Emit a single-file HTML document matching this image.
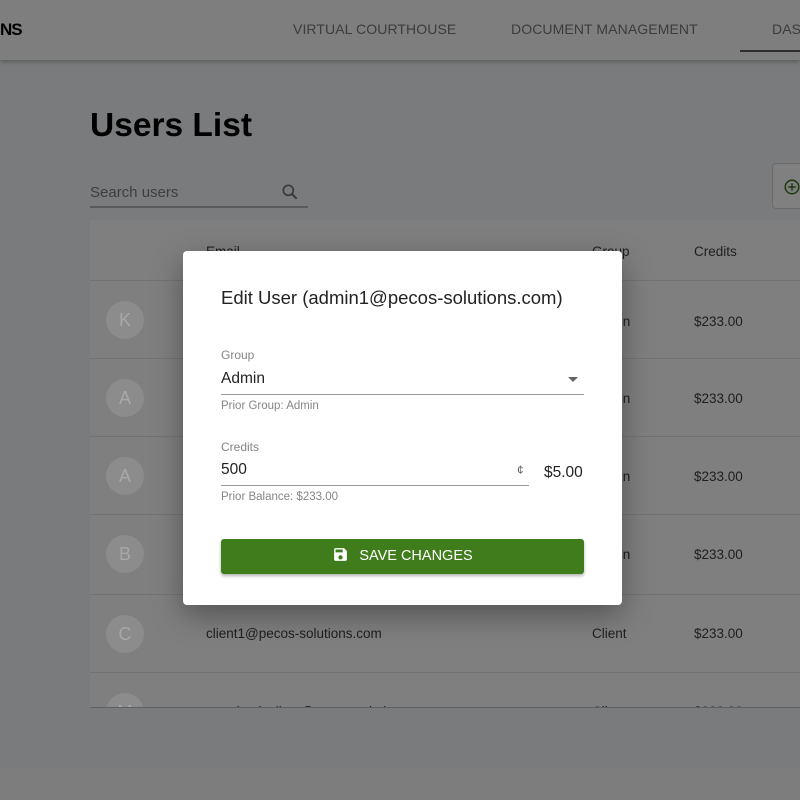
<!DOCTYPE html>
<html><head><style>
*{margin:0;padding:0;box-sizing:border-box}
body{width:800px;height:800px;overflow:hidden;background:#797b7c;font-family:"Liberation Sans",sans-serif;position:relative}
.hdr{position:absolute;left:0;top:0;width:800px;height:60px;background:#7e7e7e;box-shadow:0 2px 4px rgba(0,0,0,.25)}
.hdr span{position:absolute;top:21px;font-size:14px;color:#3c3c3c;letter-spacing:.1px}
.title{position:absolute;left:90px;top:107px;font-size:33.5px;font-weight:bold;color:#000}
.search{position:absolute;left:90px;top:184px;width:218px;height:24px;border-bottom:2px solid #5a5a5a;font-size:15px;color:#3e3e3e}
.tbl{position:absolute;left:90px;top:220px;width:710px;height:488px;background:#7f7f7f;overflow:hidden;border-bottom:1px solid #606060}
.row{position:absolute;left:0;width:710px;border-top:1px solid #737373;font-size:13.5px;color:#1e1e1e}
.av{position:absolute;left:16px;width:38px;height:38px;border-radius:50%;background:#8c8c8c;color:#a8a8a8;font-size:18px;text-align:center;line-height:38px}
.foot{position:absolute;left:0;top:768px;width:800px;height:32px;background:#7d7d7d}
.modal{position:absolute;left:183px;top:251px;width:439px;height:354px;background:#fff;border-radius:4px;box-shadow:0 10px 30px rgba(0,0,0,.35)}
.lbl{position:absolute;left:38px;font-size:12px;color:#858585}
.val{position:absolute;left:38px;font-size:15.5px;color:#222}
.line{position:absolute;left:38px;height:1px;background:#9a9a9a}
.btn{position:absolute;left:38px;top:288px;width:363px;height:35px;background:#3f7c1b;border-radius:3px;box-shadow:0 2px 3px rgba(0,0,0,.3);color:#fff;font-size:14.5px;text-align:center;line-height:35px}
</style></head><body>
<div class="hdr">
<span style="left:0;font-weight:bold;font-size:17px;color:#000;top:20px;letter-spacing:-1px">NS</span>
<span style="left:293px">VIRTUAL COURTHOUSE</span>
<span style="left:511px">DOCUMENT MANAGEMENT</span>
<span style="left:772px">DAS</span>
<div style="position:absolute;left:740px;top:50px;width:60px;height:2px;background:#2e2e2e"></div>
</div>
<div class="title">Users List</div>
<div class="search">Search users
<svg style="position:absolute;right:8px;top:-2px" width="20" height="20" viewBox="0 0 24 24"><circle cx="10" cy="10" r="6" fill="none" stroke="#3a3a3a" stroke-width="2"/><path d="M14.5 14.5L20 20" stroke="#3a3a3a" stroke-width="2.4"/></svg></div>
<div style="position:absolute;left:772px;top:163px;width:40px;height:46px;border:1px solid #6a6a6a;border-radius:4px;background:#808080"><svg style="position:absolute;left:10px;top:14px" width="18" height="18" viewBox="0 0 24 24"><circle cx="12" cy="12" r="9" fill="none" stroke="#1f3a0e" stroke-width="2"/><path d="M12 7v10M7 12h10" stroke="#1f3a0e" stroke-width="2"/></svg></div>
<div class="tbl">
<div class="row" style="top:0;height:60px;border:none"><span style="position:absolute;left:116px;top:24px">Email</span><span style="position:absolute;left:502px;top:24px">Group</span><span style="position:absolute;left:604px;top:24px">Credits</span></div>
<div class="row" style="top:60px;height:78px"><div class="av" style="top:20px">K</div><span style="position:absolute;left:502px;top:33px">Admin</span><span style="position:absolute;left:604px;top:33px">$233.00</span></div>
<div class="row" style="top:138px;height:78px"><div class="av" style="top:20px">A</div><span style="position:absolute;left:502px;top:32px">Admin</span><span style="position:absolute;left:604px;top:32px">$233.00</span></div>
<div class="row" style="top:216px;height:78px"><div class="av" style="top:20px">A</div><span style="position:absolute;left:502px;top:32px">Admin</span><span style="position:absolute;left:604px;top:32px">$233.00</span></div>
<div class="row" style="top:294px;height:80px"><div class="av" style="top:20px">B</div><span style="position:absolute;left:502px;top:32px">Admin</span><span style="position:absolute;left:604px;top:32px">$233.00</span></div>
<div class="row" style="top:374px;height:78px"><div class="av" style="top:20px">C</div><span style="position:absolute;left:116px;top:31px">client1@pecos-solutions.com</span><span style="position:absolute;left:502px;top:31px">Client</span><span style="position:absolute;left:604px;top:31px">$233.00</span></div>
<div class="row" style="top:452px;height:78px"><div class="av" style="top:20px">M</div><span style="position:absolute;left:116px;top:31px">notarized_client@pecos-solutions.com</span><span style="position:absolute;left:502px;top:31px">Client</span><span style="position:absolute;left:604px;top:31px">$233.00</span></div>
</div>
<div class="foot"></div>
<div class="modal">
<div style="position:absolute;left:38px;top:36px;font-size:18.5px;color:#222">Edit User (admin1@pecos-solutions.com)</div>
<div class="lbl" style="top:97px">Group</div>
<div class="val" style="top:119px">Admin</div>
<div style="position:absolute;left:385px;top:126px;width:0;height:0;border-left:5px solid transparent;border-right:5px solid transparent;border-top:5px solid #666"></div>
<div class="line" style="top:143px;width:363px"></div>
<div class="lbl" style="top:149px;font-size:11.5px">Prior Group: Admin</div>
<div class="lbl" style="top:189px">Credits</div>
<div class="val" style="top:210px">500</div>
<div style="position:absolute;left:334px;top:212px;font-size:12px;color:#666">¢</div>
<div style="position:absolute;left:361px;top:213px;font-size:15.5px;color:#222">$5.00</div>
<div class="line" style="top:234px;width:308px"></div>
<div class="lbl" style="top:240px;font-size:11.5px">Prior Balance: $233.00</div>
<div class="btn"><svg style="vertical-align:-3px;margin-right:10px" width="17" height="17" viewBox="0 0 24 24"><path fill="#fff" d="M17 3H5c-1.1 0-2 .9-2 2v14c0 1.1.9 2 2 2h14c1.1 0 2-.9 2-2V7l-4-4zm-5 16c-1.66 0-3-1.34-3-3s1.34-3 3-3 3 1.34 3 3-1.34 3-3 3zm3-10H5V5h10v4z"/></svg>SAVE CHANGES</div>
</div>
</body></html>
